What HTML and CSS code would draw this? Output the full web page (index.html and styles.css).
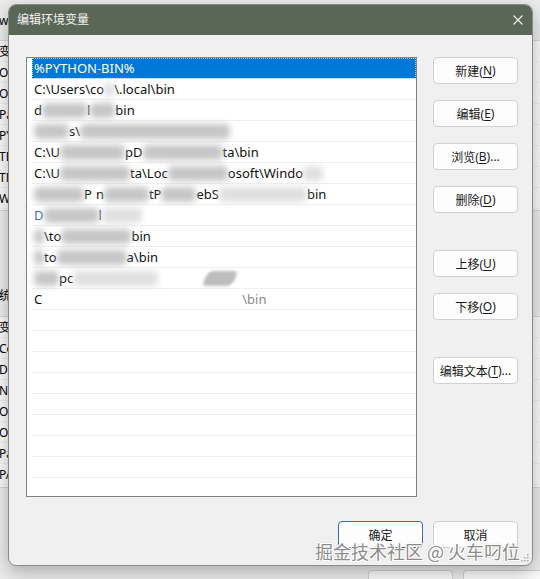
FILE: index.html
```html
<!DOCTYPE html>
<html lang="zh-CN">
<head>
<meta charset="utf-8">
<title>编辑环境变量</title>
<link rel="stylesheet" href="styles.css">
</head>
<body>
<div class="parent">
  <div class="p-head">w</div>
  <div class="p-list p-list1">
    <div class="p-row">变量</div>
    <div class="p-row">OneDrive</div>
    <div class="p-row">OneDriveConsumer</div>
    <div class="p-row">Path</div>
    <div class="p-row">PYTHON-BIN</div>
    <div class="p-row">TEMP</div>
    <div class="p-row">TMP</div>
    <div class="p-row">WSLENV</div>
  </div>
  <div class="p-label">系统变量(S)</div>
  <div class="p-list p-list2">
    <div class="p-row">变量</div>
    <div class="p-row">ComSpec</div>
    <div class="p-row">DriverData</div>
    <div class="p-row">NUMBER_OF_PROCESSORS</div>
    <div class="p-row">OS</div>
    <div class="p-row">OneDrive</div>
    <div class="p-row">Path</div>
    <div class="p-row">PATHEXT</div>
  </div>
  <div class="p-buttons">
    <div class="p-btn">确定</div>
    <div class="p-btn">取消</div>
  </div>
</div>

<div class="dialog">
  <div class="titlebar">
    <span class="title">编辑环境变量</span>
    <svg class="close" width="10" height="10" viewBox="0 0 10 10"><path d="M0.5 0.5 L9.5 9.5 M9.5 0.5 L0.5 9.5" stroke="#f4f4f4" stroke-width="1.1" fill="none"/></svg>
  </div>
  <div class="body">
    <div class="main">
      <div class="list">
        <div class="row sel">%PYTHON-BIN%</div>
        <div class="row">C:\Users\co<span class="g lt w10"></span>\.local\bin</div>
        <div class="row">d<span class="g w45"></span>l<span class="g w25"></span>bin</div>
        <div class="row"><span class="g w35"></span>s\<span class="g w150"></span></div>
        <div class="row">C:\U<span class="g w65"></span>pD<span class="g w80"></span>ta\bin</div>
        <div class="row">C:\U<span class="g w70"></span>ta\Loc<span class="g w60"></span>osoft\Windo<span class="g lt w20"></span></div>
        <div class="row"><span class="g w50"></span>P<span class="wh w4"></span>n<span class="g w45"></span>tP<span class="g w35"></span>ebS<span class="g lt w88"></span>bin</div>
        <div class="row"><span class="blue">D</span><span class="g w55"></span>l<span class="g lt w40"></span></div>
        <div class="row"><span class="g w10"></span>\to<span class="g w70"></span>bin</div>
        <div class="row"><span class="g w10"></span>to<span class="g w70"></span>a\bin</div>
        <div class="row"><span class="g w25"></span>pc<span class="g lt w85"></span><span class="wh w47"></span><span class="g skew w30"></span></div>
        <div class="row">C<span class="wh w200"></span><span class="faint">\bin</span></div>
        <div class="row"></div>
        <div class="row"></div>
        <div class="row"></div>
        <div class="row"></div>
        <div class="row"></div>
        <div class="row"></div>
        <div class="row"></div>
        <div class="row"></div>
        <div class="row"></div>
      </div>
      <div class="side">
        <div class="btn">新建(<u>N</u>)</div>
        <div class="btn gap-s">编辑(<u>E</u>)</div>
        <div class="btn gap-s">浏览(<u>B</u>)...</div>
        <div class="btn gap-s">删除(<u>D</u>)</div>
        <div class="btn gap-l">上移(<u>U</u>)</div>
        <div class="btn gap-s">下移(<u>O</u>)</div>
        <div class="btn gap-l">编辑文本(<u>T</u>)...</div>
      </div>
    </div>
    <div class="footer">
      <div class="btn primary">确定</div>
      <div class="btn">取消</div>
    </div>
  </div>
  <svg class="grip" width="8" height="8" viewBox="0 0 8 8">
    <rect x="6" y="0" width="1.5" height="1.5" fill="#a8a8a8"/>
    <rect x="3" y="3" width="1.5" height="1.5" fill="#a8a8a8"/>
    <rect x="6" y="3" width="1.5" height="1.5" fill="#a8a8a8"/>
    <rect x="0" y="6" width="1.5" height="1.5" fill="#a8a8a8"/>
    <rect x="3" y="6" width="1.5" height="1.5" fill="#a8a8a8"/>
    <rect x="6" y="6" width="1.5" height="1.5" fill="#a8a8a8"/>
  </svg>
</div>

<div class="watermark">掘金技术社区 @ 火车叼位</div>
</body>
</html>
```

FILE: styles.css
```css
* { box-sizing: border-box; }
html, body { margin: 0; padding: 0; }
body {
  width: 540px;
  height: 579px;
  overflow: hidden;
  position: relative;
  background: #dcdcdc;
  font-family: "Noto Sans", "Noto Sans CJK SC", sans-serif;
  color: #000;
}

/* background window */
.parent {
  position: absolute;
  left: -6px;
  top: 0;
  width: 560px;
  height: 579px;
  background: #ececec;
  font-size: 12px;
}
.p-head { height: 40px; padding: 12px 0 0 5px; line-height: 18px; }
.p-list {
  background: #fafafa;
  border-top: 1px solid #d6d6d6;
  border-bottom: 1px solid #d6d6d6;
  overflow: hidden;
}
.p-list1 { height: 171px; }
.p-list2 { height: 172px; }
.p-row {
  height: 21px;
  line-height: 21px;
  padding-left: 5px;
  white-space: nowrap;
  border-bottom: 1px solid #efefef;
}
.p-label {
  margin-top: 75px;
  height: 30px;
  line-height: 20px;
  padding-left: 0;
  text-indent: -7px;
  white-space: nowrap;
}
.p-buttons {
  display: flex;
  justify-content: flex-end;
  gap: 10px;
  padding-right: 6px;
  margin-top: 82px;
}
.p-btn {
  width: 85px;
  height: 27px;
  border: 1px solid #cfcfcf;
  border-radius: 4px;
  background: #fbfbfb;
  text-align: center;
  line-height: 25px;
  padding-top: 6px;
}

/* dialog window */
.dialog {
  position: absolute;
  left: 8px;
  top: 4px;
  width: 525px;
  height: 562px;
  border: 1px solid #8a8a8a;
  border-radius: 8px;
  overflow: hidden;
  display: flex;
  flex-direction: column;
  background: #f0f0f0;
  box-shadow: 0 6px 18px rgba(0, 0, 0, 0.28);
}
.titlebar {
  height: 30px;
  flex: none;
  background: #5a6656;
  display: flex;
  align-items: center;
  justify-content: space-between;
  padding: 0 9px 0 8px;
  color: #f2f2f2;
  font-size: 12px;
}
.title { line-height: 16px; }
.close { display: block; }

.body {
  flex: 1;
  display: flex;
  flex-direction: column;
  padding: 22px 14px 17px 17px;
}
.main { display: flex; gap: 16px; }

.list {
  width: 391px;
  height: 440px;
  border: 1px solid #828282;
  background: #fff;
  padding-left: 5px;
  overflow: hidden;
  flex: none;
}
.row {
  height: 21px;
  border-bottom: 1px solid #efefef;
  display: flex;
  align-items: center;
  padding-left: 2px;
  font-size: 13px;
  white-space: nowrap;
  color: #111;
}
.row.sel {
  background: #0078d7;
  color: #fff;
  outline: 1px dotted #a9d0f0;
  outline-offset: -1px;
}

/* privacy smears */
.g {
  display: inline-block;
  height: 15px;
  background: #c6c6c6;
  border-radius: 5px;
  filter: blur(3px);
  flex: none;
}
.g.lt { background: #e0e0e0; }
.g.skew { transform: skewX(-25deg); background: #bdbdbd; filter: blur(1.5px); }
.wh { display: inline-block; height: 1px; flex: none; }
.blue { color: #2f6fc0; }
.faint { color: #8a8a8a; }
.w4 { width: 4px; }
.w10 { width: 10px; }
.w20 { width: 20px; }
.w25 { width: 25px; }
.w30 { width: 30px; }
.w35 { width: 35px; }
.w40 { width: 40px; }
.w45 { width: 45px; }
.w47 { width: 47px; }
.w50 { width: 50px; }
.w55 { width: 55px; }
.w60 { width: 60px; }
.w65 { width: 65px; }
.w70 { width: 70px; }
.w80 { width: 80px; }
.w85 { width: 85px; }
.w88 { width: 88px; }
.w150 { width: 150px; }
.w200 { width: 200px; }

.side { display: flex; flex-direction: column; width: 85px; flex: none; }
.btn {
  width: 85px;
  height: 27px;
  border: 1px solid #d0d0d0;
  border-radius: 4px;
  background: #fdfdfd;
  font-size: 12px;
  display: flex;
  align-items: center;
  justify-content: center;
  color: #1a1a1a;
  white-space: nowrap;
}
.btn u { text-underline-offset: 2px; }
.gap-s { margin-top: 16px; }
.gap-l { margin-top: 37px; }

.footer {
  display: flex;
  justify-content: flex-end;
  gap: 10px;
  margin-top: 24px;
}
.btn.primary { border-color: #3a6fa6; }

.grip { position: absolute; right: 3px; bottom: 3px; }

.watermark {
  position: absolute;
  left: 315px;
  top: 538px;
  font-family: "Noto Sans CJK SC", sans-serif;
  font-size: 18px;
  line-height: 26px;
  color: #8c8c8c;
  white-space: nowrap;
  text-shadow:
    1px 0 0 #fff, -1px 0 0 #fff, 0 1px 0 #fff, 0 -1px 0 #fff,
    1px 1px 0 #fff, -1px -1px 0 #fff, 1px -1px 0 #fff, -1px 1px 0 #fff,
    0 0 3px rgba(0, 0, 0, 0.25);
}
```
